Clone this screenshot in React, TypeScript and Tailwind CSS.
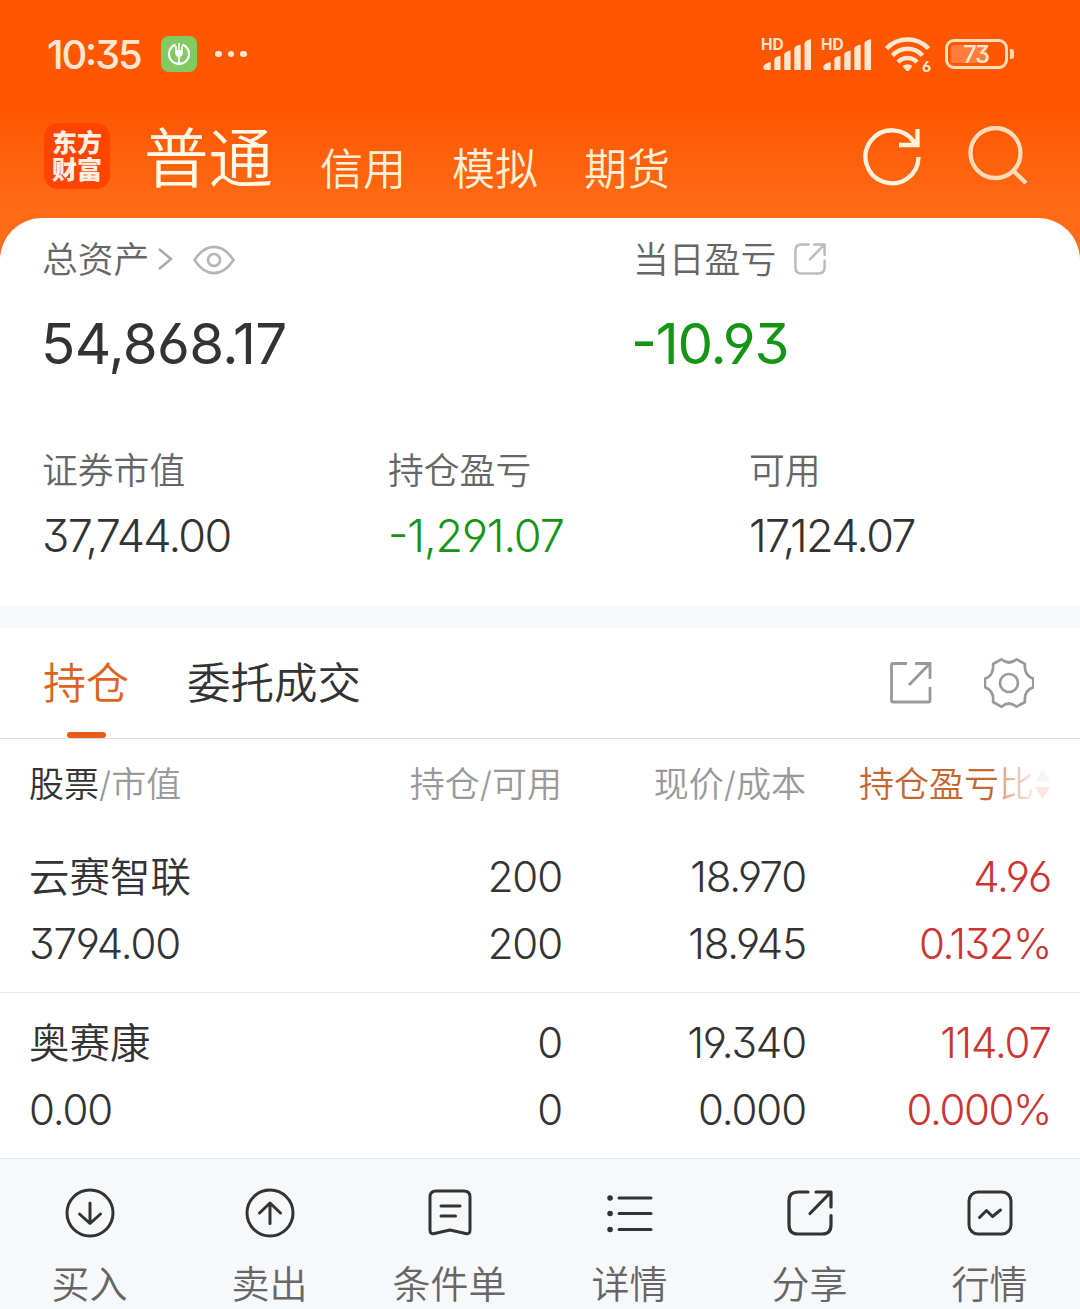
import React from "react"
import { clsx } from "clsx"

const holdings = [
  {
    name: "云赛智联",
    value: "3794.00",
    amount: "200",
    available: "200",
    price: "18.970",
    cost: "18.945",
    profit: "4.96",
    ratio: "0.132%",
  },
  {
    name: "奥赛康",
    value: "0.00",
    amount: "0",
    available: "0",
    price: "19.340",
    cost: "0.000",
    profit: "114.07",
    ratio: "0.000%",
  },
]

const Signal = () => (
  <div className="flex h-[36px] w-[52px] flex-col">
    <span className="h-[14px] whitespace-nowrap text-[15.500px] font-bold leading-[17px] text-[#ffe6d0]">HD</span>
    <svg className="-mt-[14px]" width="52" height="36" viewBox="0 0 52 36" fill="#ffe6d0">
      <path d="M2.300 31.500 Q2.300 27.500 9.700 26 V34 H4.500 Q2.300 34 2.300 31.500Z" />
      <path d="M13.300 23 Q15 20 19.500 20 V34 H13.300Z" />
      <path d="M23.200 18 Q25 15 29.600 14.500 V34 H23.200Z" />
      <path d="M33.300 12 Q35 9 39.700 8.700 V34 H33.300Z" />
      <path d="M43.500 7 Q45 4 50 3.300 V34 H43.500Z" />
    </svg>
  </div>
)

const Wifi = () => (
  <div className="flex h-[38px] w-[48px] items-end">
    <svg className="shrink-0" width="48" height="38" viewBox="0 0 48 38" fill="none" stroke="#ffe6d0" strokeWidth="4.500">
      <path d="M2.500 13.500 A29 29 0 0 1 44.500 13.500" />
      <path d="M8.500 20.500 A20 20 0 0 1 38.500 20.500" />
      <path d="M14 27.200 A13 13 0 0 1 33 27.200" />
      <path d="M18.500 31 Q23.500 27.500 28.500 31 L25 35.500 Q23.500 36.500 22 35.500Z" fill="#ffe6d0" stroke="none" />
    </svg>
    <span className="-mb-[2px] -ml-[10px] text-[15px] font-bold leading-[16px] text-[#ffe6d0]">6</span>
  </div>
)

const Battery = () => (
  <div className="flex items-center gap-[2px]">
    <div className="flex h-[30px] w-[63px] items-center rounded-[9px] border-3 border-[#ffdcb8] p-[3px]">
      <div className="flex h-[18px] w-[36px] items-center rounded-[3px] bg-[#ff7d3c] pl-[12px]">
        <span className="mt-[2px] text-[24px] font-medium leading-none tracking-[-1.200px] text-[#ffe6d0]">73</span>
      </div>
    </div>
    <div className="h-[10px] w-[4px] rounded-r-[3px] bg-[#ffdcb8]" />
  </div>
)

const StatusBar = () => (
  <div className="flex h-[108px] items-center justify-between pl-[47px] pr-[66px]">
    <div className="flex items-center">
      <span className="mt-[2px] w-[114px] text-[40px] font-medium leading-none tracking-[-2.200px] text-[#ffe6d0]">10:35</span>
      <svg width="36" height="36" viewBox="0 0 36 36" fill="none" stroke="#fff">
        <rect width="36" height="36" rx="8" fill="#82cb62" stroke="none" />
        <path d="M14.500 8.600 A10 10 0 1 0 21.500 8.600" strokeWidth="2.200" />
        <path d="M18 7 V28 M15 10 V18 M21 10 V18" strokeWidth="1.600" />
        <path d="M14.500 14 H21.500 V19 L18 22.500 L14.500 19Z" fill="#fff" stroke="none" />
      </svg>
      <div className="ml-[18px] flex gap-[6px]">
        <i className="size-[6.500px] rounded-full bg-[#ffe6d0]" />
        <i className="size-[6.500px] rounded-full bg-[#ffe6d0]" />
        <i className="size-[6.500px] rounded-full bg-[#ffe6d0]" />
      </div>
    </div>
    <div className="flex items-center">
      <div className="mr-[8px]"><Signal /></div>
      <div className="mr-[11px]"><Signal /></div>
      <div className="mr-[13px]"><Wifi /></div>
      <Battery />
    </div>
  </div>
)

const Header = () => (
  <div className="flex h-[96px] items-center pl-[44px] pr-[52px] text-[#fff0d8]">
    <div className="flex size-[66px] flex-col items-center justify-center rounded-[14px] bg-[#ff4400] pt-[2px] text-[25px] font-black leading-[27px] text-[#fff0e6]">
      <span>东方</span>
      <span>财富</span>
    </div>
    <span className="ml-[34px] mt-[5px] text-[64.500px] font-[350] leading-[92px] text-[#fffae8]">普通</span>
    <div className="ml-[47px] mt-[26px] flex gap-[46px] text-[43px] font-[350] leading-[60px]">
      <span>信用</span>
      <span>模拟</span>
      <span>期货</span>
    </div>
    <svg className="ml-auto" width="60" height="60" viewBox="0 0 60 60" fill="none" stroke="#fff2dc" strokeWidth="4.300">
      <path d="M56.500 31 A26.500 26.500 0 1 1 52 16" />
      <path d="M55.500 3 V19 H37" />
      <path d="M49 13 L55 19" />
    </svg>
    <svg className="ml-[46px]" width="60" height="60" viewBox="0 0 60 60" fill="none" stroke="#ffdcb8" strokeWidth="4.300">
      <circle cx="27.500" cy="27" r="25" />
      <path d="M45 44.500 L58 57" />
    </svg>
  </div>
)

// Rounded box with an arrow leaving through the top right corner
const ShareIcon = ({ size, stroke, width }: { size: number; stroke: string; width: number }) => (
  <svg width={size} height={size} viewBox="0 0 46 46" fill="none" stroke={stroke} strokeWidth={width} strokeLinecap="round" strokeLinejoin="round">
    <path d="M21 2 H11 Q2 2 2 11 V35 Q2 44 11 44 H35 Q44 44 44 35 V25.500" />
    <path d="M29 2 H44 V17 M43 3 L23 23.500" />
  </svg>
)

const Assets = () => (
  <section className="h-[388px] rounded-t-[42px] bg-white px-[42px] pt-[17px]">
    <div className="flex h-[50px] items-center text-[35.800px] font-[350] text-[#666]">
      <div className="flex w-[591px] items-center">
        <span className="mt-[2px]">总资产</span>
        <svg className="ml-[8px]" width="16" height="24" viewBox="0 0 16 24" fill="none" stroke="#aaa" strokeWidth="2.500">
          <path d="M2 1 L14 11 L2 21" />
        </svg>
        <svg className="ml-[20px]" width="42" height="30" viewBox="0 0 42 30" fill="none" stroke="#b5b5b5" strokeWidth="2.600">
          <path d="M1.500 15 C13 -2.500 29 -2.500 40.500 15 C29 32.500 13 32.500 1.500 15Z" />
          <circle cx="21" cy="15" r="6" />
        </svg>
      </div>
      <span className="mr-[18px] mt-[2px]">当日盈亏</span>
      <div className="-mt-[3px]"><ShareIcon size={32} stroke="#bcbcbc" width={3.6} /></div>
    </div>
    <div className="mt-[24px] flex h-[70px] items-center text-[56.500px] font-[390] leading-none">
      <span className="-ml-px w-[590px] tracking-[-0.700px]">54,868.17</span>
      <span className="tracking-[-1.200px] text-[#159415]">-10.93</span>
    </div>
    <div className="mt-[68px] flex h-[50px] items-center text-[35.800px] font-[350] text-[#666]">
      <span className="w-[346px]">证券市值</span>
      <span className="w-[361px]">持仓盈亏</span>
      <span>可用</span>
    </div>
    <div className="mt-[8px] flex h-[60px] items-center text-[45px] font-[360] leading-none tracking-[-1.700px]">
      <span className="w-[346px]">37,744.00</span>
      <span className="w-[361px] tracking-[-1.100px] text-[#159415]">-1,291.07</span>
      <span>17,124.07</span>
    </div>
  </section>
)

const Tabs = () => (
  <div className="flex h-[111px] border-b border-[#dedede] pl-[43px] pr-[46px]">
    <div className="flex flex-col items-center justify-between text-[#dd6420]">
      <span className="text-[43px] font-[350] leading-[110px]">持仓</span>
      <i className="-mt-[8px] h-[6px] w-[39px] shrink-0 rounded-full bg-[#e95b14]" />
    </div>
    <span className="ml-[58px] text-[43.500px] font-[350] leading-[110px]">委托成交</span>
    <div className="ml-auto flex h-[109px] items-center">
      <svg width="44" height="44" viewBox="0 0 44 44" fill="none" stroke="#999" strokeWidth="2.800">
        <path d="M18 2.500 H4 Q2.500 2.500 2.500 4 V39.500 Q2.500 41 4 41 H39.500 Q41 41 41 39.500 V26" />
        <path d="M26 2.500 H41 V18 M41 2.500 L20 24" />
      </svg>
      <svg className="ml-[51px]" width="50" height="50" viewBox="0 0 150 150" fill="none" stroke="#999" strokeWidth="8" strokeLinejoin="round">
        <path d="M27 18 L52 4 Q75 23 98 4 L123 18 Q119 52 148 62 V88 Q119 98 123 132 L98 146 Q75 127 52 146 L27 132 Q31 98 3 88 V62 Q31 52 27 18Z" />
        <circle cx="75" cy="75" r="27" />
      </svg>
    </div>
  </div>
)

const columns = "grid grid-cols-[273px_260px_244px_245px] pl-[29px] text-right font-[350]"

const TableHead = () => (
  <div className={clsx(columns, "h-[88px] text-[35px] leading-[90px] text-[#999]")}>
    <span className="text-left">
      <span className="text-[#333]">股票</span>/市值
    </span>
    <span>持仓/可用</span>
    <span>现价/成本</span>
    <span className="flex items-center justify-end whitespace-nowrap text-[#c5682f]">
      持仓盈亏
      <span className="bg-linear-to-r from-[#dca080] to-[#fbe8df] bg-clip-text text-transparent">比</span>
      <svg width="17" height="32" viewBox="0 0 17 32">
        <path d="M8.500 1 L16 13.500 H1Z" fill="#f5f5f6" />
        <path d="M1 19 H16 L8.500 31Z" fill="#fde6db" />
      </svg>
    </span>
  </div>
)

const Holding = ({ item }: { item: (typeof holdings)[number] }) => (
  <div
    className={clsx(
      columns,
      "h-[166px] border-b border-[#e8e8e8] pt-[16px] text-[42px] leading-[67px] tracking-[-1.100px]"
    )}
  >
    <div className="text-left">
      <p className="h-[67px] pt-px text-[40.500px] tracking-normal">{item.name}</p>
      <p>{item.value}</p>
    </div>
    <div>
      <p>{item.amount}</p>
      <p>{item.available}</p>
    </div>
    <div>
      <p>{item.price}</p>
      <p>{item.cost}</p>
    </div>
    <div className="text-[#cb3532]">
      <p>{item.profit}</p>
      <p className="tracking-[-1.400px]">{item.ratio}</p>
    </div>
  </div>
)

const iconProps = {
  width: 50,
  height: 52,
  viewBox: "0 0 50 52",
  fill: "none",
  stroke: "#333",
  strokeWidth: 3,
  strokeLinecap: "round" as const,
  strokeLinejoin: "round" as const,
}

const actions = [
  {
    label: "买入",
    icon: (
      <svg {...iconProps}>
        <circle cx="25" cy="26" r="23" />
        <path d="M25 16 V36 M14.500 27 L25 36.500 L35.500 27" />
      </svg>
    ),
  },
  {
    label: "卖出",
    icon: (
      <svg {...iconProps}>
        <circle cx="25" cy="26" r="23" />
        <path d="M25 36.500 V16 M14.500 26 L25 16 L35.500 26" />
      </svg>
    ),
  },
  {
    label: "条件单",
    icon: (
      <svg {...iconProps}>
        <path d="M11 4 H39 Q45 4 45 10 V43 Q45 47.500 40.500 46.500 L25 43 L9.500 46.500 Q5 47.500 5 43 V10 Q5 4 11 4Z" />
        <path d="M16 19 H35 M16 29 H30.500" />
      </svg>
    ),
  },
  {
    label: "详情",
    icon: (
      <svg {...iconProps}>
        <path d="M14 11 H46 M14 26.500 H46 M14 42.500 H46" />
        <path d="M5 11 H5.100 M5 26.500 H5.100 M5 42.500 H5.100" strokeWidth="5.500" />
      </svg>
    ),
  },
  { label: "分享", icon: <ShareIcon size={46} stroke="#333" width={3.2} /> },
  {
    label: "行情",
    icon: (
      <svg {...iconProps}>
        <rect x="4" y="5" width="42" height="42" rx="9" />
        <path d="M14.500 30.500 L21.500 23.500 L27.500 29.500 L35.500 23" />
      </svg>
    ),
  },
]

const BottomBar = () => (
  <nav className="grid h-[151px] grid-cols-6 bg-[#f7f8fa] pt-[27px]">
    {actions.map((action) => (
      <div key={action.label} className="flex flex-col items-center">
        <div className="mr-px flex h-[54px] items-center">{action.icon}</div>
        <span className="mr-px mt-[16px] text-[38px] font-[350] leading-[56px] text-[#666]">{action.label}</span>
      </div>
    ))}
  </nav>
)

const App = () => {
  return (
    <main className="h-[1309px] w-[1080px] overflow-hidden bg-white font-[Inter,'Noto_Sans_CJK_SC',sans-serif] text-[#333] [font-feature-settings:'case','cv03','cv04','cv09']">
      <div className="bg-linear-to-b from-[#ff5700] from-[110px] to-[#ff6c17] to-[218px]">
        <StatusBar />
        <Header />
        <div className="h-[14px]" />
        <Assets />
      </div>
      <div className="h-[22px] bg-[#f7f8fa]" />
      <Tabs />
      <TableHead />
      {holdings.map((item) => (
        <Holding key={item.name} item={item} />
      ))}
      <BottomBar />
    </main>
  )
}

export default App
